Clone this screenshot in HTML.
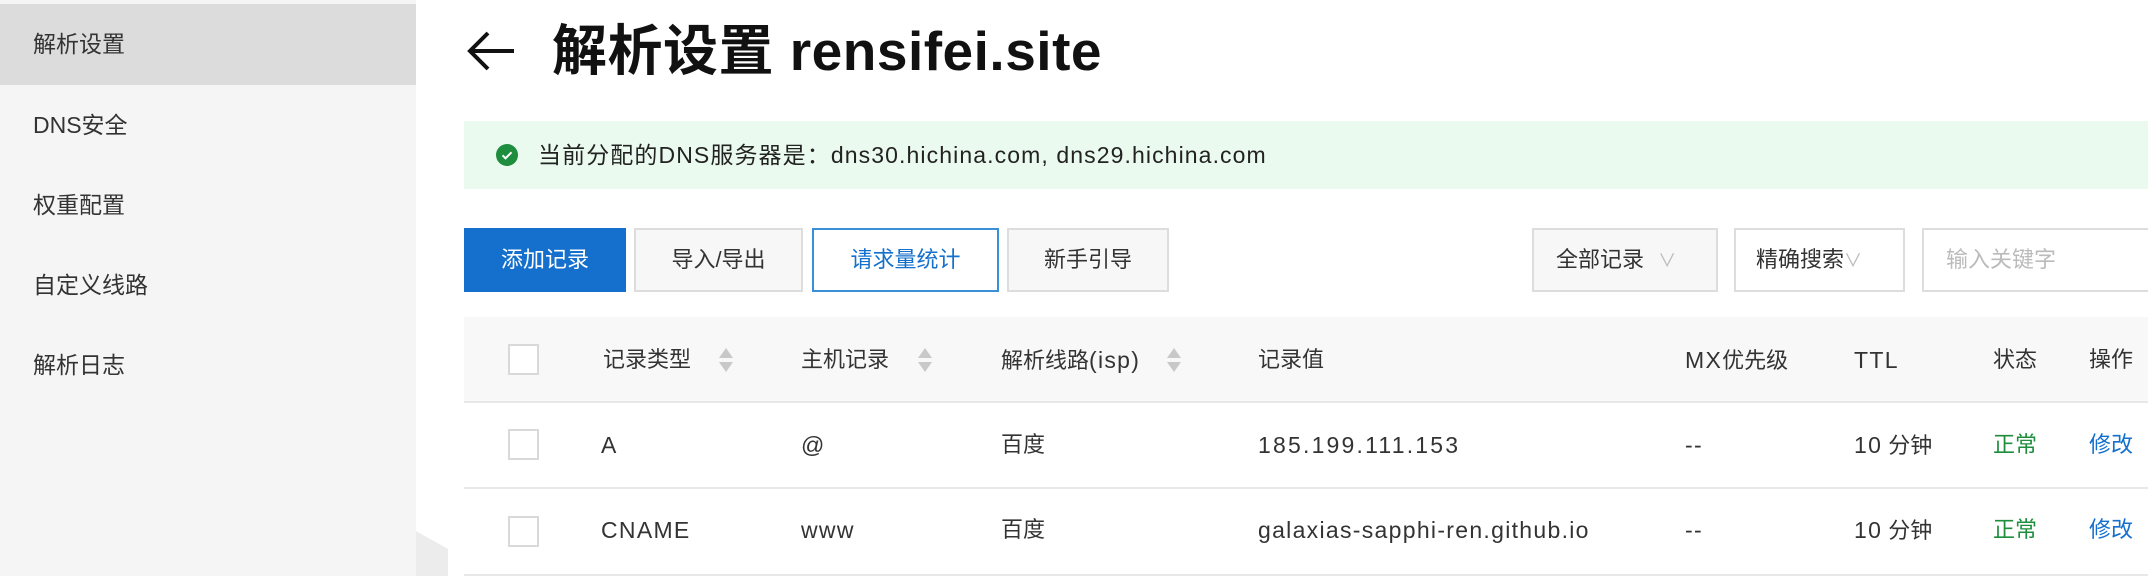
<!DOCTYPE html>
<html><head><meta charset="utf-8"><style>
*{margin:0;padding:0;box-sizing:border-box}
body{width:2148px;height:576px;overflow:hidden;background:#fff;font-family:"Liberation Sans","Noto Sans CJK SC",sans-serif;color:#333;position:relative}
.abs{position:absolute}
.side{left:0;top:0;width:416px;height:576px;background:#f5f5f5}
.si{position:absolute;left:33px;font-size:23px;color:#333;line-height:30px}
.btn{position:absolute;top:228px;height:64px;border:2px solid #ddd;background:#f7f7f7;font-size:22px;line-height:60px;text-align:center;color:#333}
.th,.td{position:absolute;font-size:22px;line-height:30px;color:#333;white-space:nowrap}
.lat{font-size:23px;letter-spacing:1.3px}
.cb{position:absolute;left:508px;width:31px;height:31px;border:2px solid #d9d9d9;background:#fff}
.sort{position:absolute;width:16px;height:28px}
</style></head><body>
<div class="abs side"></div>
<div class="abs" style="left:0;top:4px;width:416px;height:81px;background:#dcdcdc"></div>
<div class="si" style="top:29px">解析设置</div>
<div class="si" style="top:110px">DNS安全</div>
<div class="si" style="top:190px">权重配置</div>
<div class="si" style="top:270px">自定义线路</div>
<div class="si" style="top:350px">解析日志</div>
<svg class="abs" style="left:416px;top:525px" width="40" height="51"><polygon points="0,6 32,24 32,51 0,51" fill="#ececec"/></svg>

<svg class="abs" style="left:466px;top:30px" width="52" height="42"><path d="M48 21H4M22 3L4 21l18 18" stroke="#111" stroke-width="4" fill="none"/></svg>
<div class="abs" style="left:552px;top:18px;font-size:55px;font-weight:bold;color:#111;line-height:66px;white-space:nowrap;letter-spacing:0.5px">解析设置 rensifei.site</div>

<div class="abs" style="left:464px;top:121px;width:1684px;height:68px;background:#ebfaef"></div>
<svg class="abs" style="left:496px;top:144px" width="22" height="22"><circle cx="11" cy="11" r="11" fill="#1e8e3e"/><path d="M6.5 11.3l3 3 6-6" stroke="#fff" stroke-width="2" fill="none"/></svg>
<div class="abs" style="left:538px;top:140px;font-size:23px;line-height:30px;color:#222;white-space:nowrap;letter-spacing:1.1px">当前分配的DNS服务器是：dns30.hichina.com, dns29.hichina.com</div>

<div class="btn" style="left:464px;width:162px;background:#1470cc;border-color:#1470cc;color:#fff">添加记录</div>
<div class="btn" style="left:634px;width:169px">导入/导出</div>
<div class="btn" style="left:812px;width:187px;background:#fff;border-color:#3a8fd9;color:#1470cc">请求量统计</div>
<div class="btn" style="left:1007px;width:162px">新手引导</div>
<div class="btn" style="left:1532px;width:186px;text-align:left;padding-left:22px">全部记录 <span style="color:#bbb;font-size:18px;margin-left:8px">∨</span></div>
<div class="btn" style="left:1734px;width:171px;background:#fff;text-align:left;padding-left:20px">精确搜索<span style="color:#bbb;font-size:18px">∨</span></div>
<div class="btn" style="left:1922px;width:240px;background:#fff;text-align:left;padding-left:22px;color:#bbb">输入关键字</div>

<div class="abs" style="left:464px;top:317px;width:1684px;height:86px;background:#f8f8f8;border-bottom:2px solid #e8e8e8"></div>
<div class="abs" style="left:464px;top:487px;width:1684px;height:2px;background:#e8e8e8"></div>
<div class="abs" style="left:464px;top:574px;width:1684px;height:2px;background:#e8e8e8"></div>

<div class="cb" style="top:344px"></div>
<div class="cb" style="top:429px"></div>
<div class="cb" style="top:516px"></div>

<div class="th" style="left:603px;top:345px">记录类型</div>
<div class="th" style="left:801px;top:345px">主机记录</div>
<div class="th" style="left:1001px;top:345px">解析线路<span class="lat">(isp)</span></div>
<div class="th" style="left:1258px;top:345px">记录值</div>
<div class="th" style="left:1685px;top:345px"><span class="lat">MX</span>优先级</div>
<div class="th lat" style="left:1854px;top:345px">TTL</div>
<div class="th" style="left:1993px;top:345px">状态</div>
<div class="th" style="left:2089px;top:345px">操作</div>
<svg class="sort" style="left:718px;top:346px"><path d="M8 2l7 10H1z M8 26l7-10H1z" fill="#c8c8c8"/></svg>
<svg class="sort" style="left:917px;top:346px"><path d="M8 2l7 10H1z M8 26l7-10H1z" fill="#c8c8c8"/></svg>
<svg class="sort" style="left:1166px;top:346px"><path d="M8 2l7 10H1z M8 26l7-10H1z" fill="#c8c8c8"/></svg>

<div class="td lat" style="left:601px;top:430px">A</div>
<div class="td lat" style="left:801px;top:430px">@</div>
<div class="td" style="left:1001px;top:430px">百度</div>
<div class="td lat" style="left:1258px;top:430px;letter-spacing:2.2px">185.199.111.153</div>
<div class="td lat" style="left:1685px;top:430px">--</div>
<div class="td" style="left:1854px;top:430px"><span class="lat">10</span> 分钟</div>
<div class="td" style="left:1993px;top:430px;color:#1e8e3e">正常</div>
<div class="td" style="left:2089px;top:430px;color:#1470cc">修改</div>

<div class="td lat" style="left:601px;top:515px">CNAME</div>
<div class="td lat" style="left:801px;top:515px">www</div>
<div class="td" style="left:1001px;top:515px">百度</div>
<div class="td lat" style="left:1258px;top:515px">galaxias-sapphi-ren.github.io</div>
<div class="td lat" style="left:1685px;top:515px">--</div>
<div class="td" style="left:1854px;top:515px"><span class="lat">10</span> 分钟</div>
<div class="td" style="left:1993px;top:515px;color:#1e8e3e">正常</div>
<div class="td" style="left:2089px;top:515px;color:#1470cc">修改</div>
</body></html>
